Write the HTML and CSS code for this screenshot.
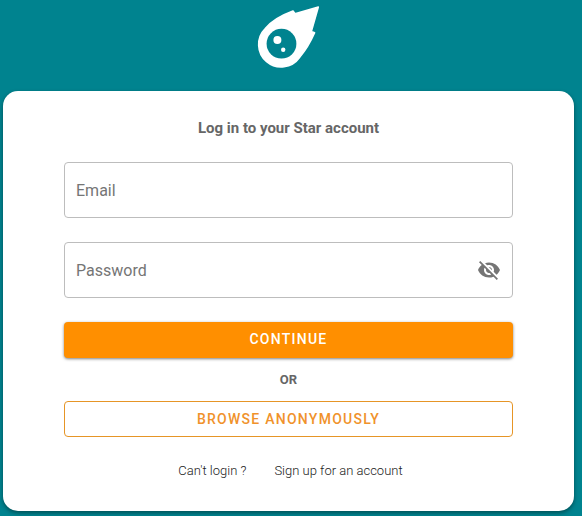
FILE: index.html
```html
<!DOCTYPE html>
<html lang="en">
<head>
<meta charset="utf-8">
<meta name="viewport" content="width=device-width, initial-scale=1">
<title>Star login</title>
<link rel="stylesheet" href="styles.css">
</head>
<body>
<header class="brand">
  <svg class="logo" viewBox="0 0 64 64" role="img" aria-label="Star">
    <path fill="#fff" stroke="#fff" stroke-width="1.600" stroke-linejoin="round" d="M36 6 38 8.800 61.300 2 54.300 26.600 57.600 27.800C54 36 48.500 45.500 42.500 52.500A22.500 22.500 0 1 1 8.300 23.500C14 16.500 25 10 36 6Z"/>
    <circle cx="24.500" cy="38.700" r="14.900" fill="#00838f"/>
    <circle cx="20.400" cy="35" r="4" fill="#fff"/>
    <circle cx="26.200" cy="44.700" r="2.200" fill="#fff"/>
  </svg>
</header>
<main class="card">
  <h1 class="title">Log in to your Star account</h1>
  <form class="form">
    <div class="field">
      <input class="input" type="email" aria-label="Email" placeholder="Email">
    </div>
    <div class="field">
      <input class="input" type="password" aria-label="Password" placeholder="Password">
      <button class="toggle" type="button" aria-label="Show password">
        <svg class="eye" viewBox="0 0 24 24" aria-hidden="true"><path fill="currentColor" d="M12 7c2.760 0 5 2.240 5 5 0 .65-.13 1.260-.36 1.830l2.920 2.920c1.510-1.260 2.700-2.890 3.430-4.750-1.730-4.390-6-7.500-11-7.500-1.400 0-2.740.25-3.980.7l2.160 2.160C10.740 7.130 11.350 7 12 7zM2 4.270l2.280 2.280.46.46C3.080 8.300 1.780 10.020 1 12c1.730 4.390 6 7.500 11 7.500 1.550 0 3.030-.3 4.380-.84l.42.42L19.730 22 21 20.730 3.270 3 2 4.270zM7.530 9.800l1.550 1.550c-.05.21-.08.43-.08.65 0 1.660 1.340 3 3 3 .22 0 .44-.03.65-.08l1.550 1.550c-.67.33-1.410.53-2.200.53-2.760 0-5-2.240-5-5 0-.79.2-1.530.53-2.200zm4.310-.78l3.150 3.150.02-.16c0-1.660-1.340-3-3-3l-.17.010z"/></svg>
      </button>
    </div>
    <button class="button primary" type="submit">Continue</button>
    <p class="or">OR</p>
    <button class="button outlined" type="button">Browse anonymously</button>
  </form>
  <nav class="links">
    <a href="#">Can't login ?</a>
    <a href="#">Sign up for an account</a>
  </nav>
</main>
</body>
</html>
```
FILE: styles.css
```css
* {
  box-sizing: border-box;
}

body {
  margin: 0;
  padding: 5px 8px 5px 3px;
  background: #00838f;
  font-family: Roboto, sans-serif;
}

.brand {
  display: flex;
  justify-content: center;
  margin-bottom: 22px;
}

.logo {
  width: 64px;
  height: 64px;
}

.card {
  padding: 27px 61px 30px;
  border-radius: 15px;
  background: #fff;
  box-shadow: 0 2px 4px rgba(0, 0, 0, 0.4);
}

.title {
  margin: 0 0 24px;
  color: #666;
  font-size: 15px;
  font-weight: 700;
  line-height: 20px;
  text-align: center;
}

.form {
  display: flex;
  flex-direction: column;
}

.field {
  display: flex;
  align-items: center;
  height: 56px;
  margin-bottom: 24px;
  padding: 0 11px;
  border: 1px solid #bdbdbd;
  border-radius: 4px;
}

.input {
  flex: 1;
  min-width: 0;
  height: 100%;
  padding: 0;
  border: 0;
  outline: 0;
  background: none;
  color: #333;
  font: 400 16px/24px Roboto, sans-serif;
}

.input::placeholder {
  color: #757575;
  opacity: 1;
}

.toggle {
  display: flex;
  padding: 0;
  border: 0;
  background: none;
  color: #757575;
}

.eye {
  width: 24px;
  height: 24px;
}

.button {
  height: 36px;
  padding: 0 16px;
  border: 0;
  border-radius: 4px;
  font: 500 14px/34px Roboto, sans-serif;
  letter-spacing: 0.09em;
  text-transform: uppercase;
}

.primary {
  padding-bottom: 2px;
  background: #ff8f00;
  color: #fff;
  box-shadow: 0 1px 3px rgba(0, 0, 0, 0.5);
}

.outlined {
  border: 1px solid #e69526;
  background: #fff;
  color: #f0922b;
}

.or {
  margin: 12px 0 11px;
  color: #666;
  font-size: 13px;
  font-weight: 700;
  line-height: 20px;
  text-align: center;
}

.links {
  display: flex;
  justify-content: center;
  gap: 28px;
  margin-top: 24px;
  padding-left: 4px;
}

.links a {
  color: #222;
  font-size: 13px;
  font-weight: 300;
  line-height: 20px;
  text-decoration: none;
}
```
